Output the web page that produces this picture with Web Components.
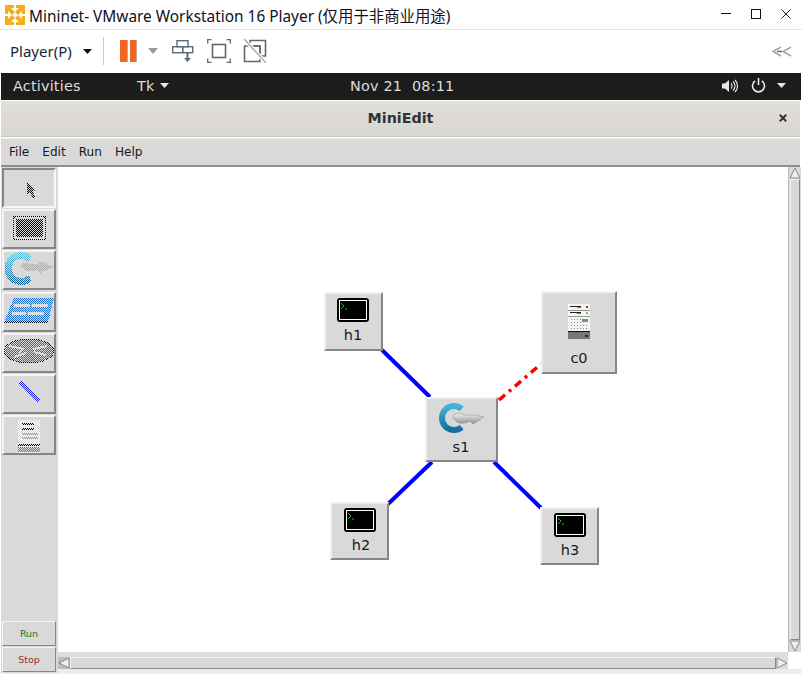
<!DOCTYPE html>
<html><head><meta charset="utf-8"><title>MiniEdit</title>
<style>
html,body{margin:0;padding:0;background:#fff;overflow:hidden}
body{width:802px;height:674px;font-family:"DejaVu Sans",sans-serif}
</style></head>
<body>
<vm-shell>
  <vm-titlebar slot="top">Mininet- VMware Workstation 16 Player (仅用于非商业用途)</vm-titlebar>
  <vm-toolbar slot="top"></vm-toolbar>
  <gnome-bar slot="top"></gnome-bar>
  <win-title slot="top">MiniEdit</win-title>
  <tk-menu slot="top"></tk-menu>
  <tk-palette slot="left"></tk-palette>
  <tk-canvas slot="main">
    <tk-node style="left:266px;top:125px;width:59px;height:59px" icon="term" ix="13" iy="6" lx="29" ly="35">h1</tk-node>
    <tk-node style="left:483px;top:124px;width:76px;height:83px" icon="server" ix="26" iy="12" lx="38" ly="59">c0</tk-node>
    <tk-node style="left:367px;top:230px;width:73px;height:65px" icon="switch" ix="12" iy="5" lx="36" ly="42">s1</tk-node>
    <tk-node style="left:272px;top:335px;width:59px;height:58px" icon="term" ix="14" iy="6" lx="31" ly="35">h2</tk-node>
    <tk-node style="left:482px;top:340px;width:59px;height:58px" icon="term" ix="14" iy="6" lx="30" ly="35">h3</tk-node>
  </tk-canvas>
</vm-shell>
<script>
const def=(name,html,init)=>customElements.define(name,class extends HTMLElement{
  constructor(){super();this.attachShadow({mode:'open'}).innerHTML=typeof html==='function'?html(this):html}
  connectedCallback(){init&&init(this)}
});
const CJK='"Noto Sans","Noto Sans CJK SC",sans-serif';

def('vm-shell',`<style>
:host{display:flex;flex-direction:column;width:802px;height:674px;background:#fff;box-sizing:border-box}
.main{display:flex;height:506px;margin:0 1px 0 1px;background:#d9d9d9}
.bottom{flex:1;background:#f0f0f0}
</style>
<slot name="top"></slot>
<div class="main"><slot name="left"></slot><slot name="main"></slot></div>
<div class="bottom"></div>`);

def('vm-titlebar',`<style>
:host{display:flex;align-items:center;box-sizing:border-box;background:#fff;border-bottom:1px solid #e4e4e4;padding:0 11px 0 5px;position:relative;flex:none;height:30px;
font:15.400px ${CJK};color:#101020}
svg{display:block;flex:none}
.t{margin-left:4px;flex:1;white-space:nowrap;position:relative;top:1px}
.b{display:flex;gap:20px;align-items:center;margin-top:-1px}
</style>
<svg width="20" height="20" viewBox="0 0 20 20" fill="#f3ae1b"><path id="c" d="M0 0h9v3H6l4 4-3 3-4-4v3H0z"/><path d="M20 0v9h-3V6l-4 4-3-3 4-4h-3V0z"/><path d="M20 20h-9v-3h3l-4-4 3-3 4 4v-3h3z"/><path d="M0 20v-9h3v3l4-4 3 3-4 4h3v3z"/></svg>
<span class="t"><slot></slot></span>
<div class="b">
<svg width="10" height="10" viewBox="0 0 10 10"><path d="M0 4.500h10" stroke="#111" stroke-width="1"/></svg>
<svg width="10" height="10" viewBox="0 0 10 10"><rect x=".5" y=".5" width="9" height="9" fill="none" stroke="#111"/></svg>
<svg width="10" height="10" viewBox="0 0 10 10"><path d="M.5.5l9 9M9.500.5l-9 9" stroke="#222" stroke-width="1"/></svg>
</div>`);

def('vm-toolbar',`<style>
:host{display:flex;align-items:center;flex:none;height:42px;background:#fff;padding-left:10px;position:relative;font:15px ${CJK};color:#1a2436}
svg{display:block;flex:none}
.sep{width:1px;height:28px;background:#c9c9c9;margin:0 16px 0 11px}
.car{margin-left:11px}
.r{margin-left:auto;margin-right:10px}
</style>
<span>Player(P)</span>
<svg class="car" width="9" height="5" viewBox="0 0 9 5"><path d="M0 0h9L4.500 5z" fill="#111"/></svg>
<div class="sep"></div>
<svg width="18" height="22" viewBox="0 0 18 22"><rect x="0" y="0" width="8" height="22" fill="#f26522"/><rect x="10" y="0" width="7" height="22" fill="#f26522"/><path d="M7.500 0v22M16.500 0v22" stroke="#c9a48f"/></svg>
<svg style="margin-left:10px" width="10" height="6" viewBox="0 0 10 6"><path d="M0 0h10L5 6z" fill="#999"/></svg>
<svg style="margin-left:14px" width="22" height="23" viewBox="0 0 22 23" fill="none" stroke="#5f6a72" stroke-width="1.400"><rect x="5" y=".7" width="11" height="6"/><rect x=".7" y="6.700" width="10" height="6"/><rect x="10.700" y="6.700" width="10" height="6"/><path d="M15.500 13v6" stroke-width="2"/><path d="M12 18h7l-3.500 4z" fill="#5f6a72" stroke="none"/></svg>
<svg style="margin-left:13px" width="24" height="24" viewBox="0 0 24 24" fill="none" stroke="#5f6a72" stroke-width="1.300"><path d="M.7 4.500V.7H4.500M19.500 .7h3.800V4.500M23.300 19.500v3.800H19.500M4.500 23.300H.7V19.500"/><rect x="5.500" y="5.500" width="13" height="13" stroke-width="1.600"/></svg>
<svg style="margin-left:12px" width="24" height="24" viewBox="0 0 24 24" fill="none" stroke="#5f6a72" stroke-width="1.600"><path d="M7 7V1.500h15.500V17H17M17 17V7H7"/><path d="M1.500 7H17v15.500H1.500z" stroke-width="1.600"/><path d="M1 0l22 24" stroke="#fff" stroke-width="4"/><path d="M1 0l22 24" stroke="#a9b0b5" stroke-width="1.500"/></svg>
<svg class="r" width="20" height="11" viewBox="0 0 20 11" fill="none" stroke="#9aa5ad" stroke-width="1.500"><path d="M9 1L1 5.500l8 4.500M19 1l-8 4.500 8 4.500"/><path d="M5 5.500h5" stroke="#5f6a72"/></svg>`);

def('gnome-bar',`<style>
:host{display:flex;align-items:center;flex:none;height:27px;box-sizing:border-box;padding-bottom:2px;margin:1px 1px 0 1px;background:#1c1c1c;color:#dcdcdc;font:14.400px "DejaVu Sans",sans-serif;letter-spacing:.2px;position:relative}
svg{display:block;flex:none}
.a{margin-left:12px;width:124px}
.tk{width:23px}
.clock{margin-left:181px;width:62px}
.right{margin-left:auto;display:flex;align-items:center;margin-right:15px}
</style>
<span class="a">Activities</span><span class="tk">Tk</span>
<svg width="9" height="5" viewBox="0 0 9 5"><path d="M0 0h9L4.500 5z" fill="#e8e8e8"/></svg>
<span class="clock">Nov 21</span><span>08:11</span>
<div class="right">
<svg width="16" height="14" viewBox="0 0 16 14" fill="none" stroke="#e8e8e8"><path d="M0 4.500h3L7 1v12L3 9.500H0z" fill="#e8e8e8" stroke="none"/><path d="M9 4.500a3.500 3.500 0 010 5M11 2.500a6 6 0 010 9M13 1a8.500 8.500 0 010 12" stroke-width="1.100"/></svg>
<svg style="margin-left:13px" width="15" height="15" viewBox="0 0 15 15" fill="none" stroke="#e8e8e8" stroke-width="1.600"><path d="M4 3a6 6 0 107 0"/><path d="M7.500 0v7"/></svg>
<svg style="margin-left:11px" width="9" height="5" viewBox="0 0 9 5"><path d="M0 0h9L4.500 5z" fill="#e8e8e8"/></svg>
</div>`);

def('win-title',`<style>
:host{display:flex;align-items:center;justify-content:center;flex:none;height:36px;margin:1px 2px 0 1px;background:linear-gradient(#e2dfdb,#d9d6d1);border-bottom:1px solid #c9c7c4;box-sizing:border-box;font:bold 14.300px "DejaVu Sans",sans-serif;color:#2e3436;position:relative;padding-bottom:1px}
svg{position:absolute;right:13px;top:13px}
</style><slot></slot>
<svg width="8" height="8" viewBox="0 0 8 8"><path d="M.8.8l6.400 6.400M7.200.8L.8 7.200" stroke="#2e3436" stroke-width="2"/></svg>`);

def('tk-menu',`<style>
:host{display:flex;align-items:center;gap:13px;flex:none;height:29px;margin:1px 2px 0 1px;box-sizing:border-box;padding:0 0 0 8px;background:#d9d9d9;border-top:1px solid #eee;border-bottom:2px solid #8e8e8e;font:12.100px "DejaVu Sans",sans-serif;color:#1a1a1a}
</style><span>File</span><span>Edit</span><span>Run</span><span>Help</span>`);

const stip=`<defs><pattern id="p" width="2" height="2" patternUnits="userSpaceOnUse"><rect width="1" height="1" fill="#fff"/><rect x="1" y="1" width="1" height="1" fill="#fff"/></pattern><mask id="m" maskUnits="userSpaceOnUse" x="0" y="0" width="54" height="40"><rect width="54" height="40" fill="url(#p)"/></mask><linearGradient id="sg" x1="0" y1="0" x2="0" y2="1"><stop offset="0" stop-color="#5fc0dd"/><stop offset="1" stop-color="#0a5f92"/></linearGradient></defs>`;
const pIcons={
 arrow:`<g mask="url(#m)"><path d="M25 14l8 8-3 1 3 6-2 1-3-6-3 3z" fill="#000" stroke="#000" stroke-width=".6"/></g>`,
 host:`<g mask="url(#m)"><rect x="11.500" y="7.500" width="32" height="23" rx="2" fill="none" stroke="#000" stroke-width="1.500"/><rect x="14" y="10" width="27" height="18" fill="#000"/></g>`,
 sw:`<g mask="url(#m)"><path d="M28 9a13 13 0 100 19" fill="none" stroke="url(#sg)" stroke-width="7"/><path d="M18 15c3-3 7-3 10-1l9 0 1-3 14 6-14 6-2-3c-4 2-12 2-15-1-1-1-2-2-3-4z" fill="#a8a8a8"/></g>`,
 legacy:`<g mask="url(#m)"><path d="M12 6h40l-6 24H2z" fill="#1a6fd0"/><path d="M2 30h44" stroke="#000" stroke-width="2"/></g><g fill="#ddd" mask="url(#m)"><rect x="12" y="12" width="16" height="3"/><rect x="30" y="12" width="16" height="3"/><rect x="10" y="20" width="14" height="3"/><rect x="26" y="20" width="16" height="3"/></g>`,
 router:`<g mask="url(#m)"><ellipse cx="27" cy="18" rx="25" ry="12" fill="#1a6fd0" stroke="#000"/><path d="M7 13l14 3-4 4M45 13l-14 3M12 24l12-4M44 22l-12-3" stroke="#ddd" stroke-width="2" fill="none"/></g>`,
 link:`<g mask="url(#m)"><path d="M18 8l19 19" stroke="#2222ff" stroke-width="3"/></g>`,
 ctl:`<g mask="url(#m)"><rect x="16" y="5" width="22" height="33" fill="#fff"/><path d="M20 9h12M20 14h12M16 30h22" stroke="#000" stroke-width="2"/><path d="M20 19h16M20 23h16" stroke="#999" stroke-width="2"/><rect x="16" y="32" width="22" height="5" fill="#777"/></g>`
};
def('tk-tool',el=>`<style>
:host{display:block;width:54px;height:40px;box-sizing:border-box;background:#d9d9d9;border:2px solid;border-color:#f4f4f4 #868686 #868686 #f4f4f4;margin-bottom:1px;position:relative}
:host([active]){border-color:#868686 #f8f8f8 #f8f8f8 #868686}
svg{position:absolute;left:-2px;top:-2px;display:block}
</style><svg width="54" height="40" shape-rendering="crispEdges">${stip}${pIcons[el.getAttribute('icon')]||''}</svg>`);
def('tk-btn',`<style>
:host{display:flex;align-items:center;justify-content:center;width:54px;height:25px;box-sizing:border-box;background:#d9d9d9;border:1px solid;border-color:#f4f4f4 #868686 #868686 #f4f4f4;font:9.500px "DejaVu Sans",sans-serif;margin-bottom:1px}
</style><slot></slot>`);
def('tk-palette',`<style>
:host{display:flex;flex-direction:column;flex:none;width:57px;padding:1px 0 0 1px;box-sizing:border-box;background:#d9d9d9}
.sp{flex:1}
</style>
<tk-tool icon="arrow" active></tk-tool><tk-tool icon="host"></tk-tool><tk-tool icon="sw"></tk-tool><tk-tool icon="legacy" style="margin-top:1px"></tk-tool><tk-tool icon="router"></tk-tool><tk-tool icon="link"></tk-tool><tk-tool icon="ctl"></tk-tool>
<div class="sp"></div>
<tk-btn style="color:#0f7a0f">Run</tk-btn><tk-btn style="color:#a52a2a">Stop</tk-btn>`);

const nIcons={
 term:`<svg width="32" height="24" viewBox="0 0 32 24"><rect width="32" height="24" rx="3" fill="#000"/><rect x="2.500" y="2.500" width="27" height="19" fill="none" stroke="#fff"/><path d="M4 5l3 3-3 3M8 11h2" stroke="#18c018" fill="none"/></svg>`,
 server:`<svg width="24" height="37" viewBox="0 0 24 37"><rect x="1" y="1" width="22" height="35" fill="#f4f4f4"/><rect x="1" y="7" width="22" height="1" fill="#999"/><rect x="1" y="13" width="22" height="1" fill="#999"/><rect x="3" y="3" width="11" height="1" fill="#222"/><rect x="10" y="4" width="4" height="1" fill="#777"/><rect x="3" y="9" width="11" height="1" fill="#222"/><rect x="10" y="10" width="4" height="1" fill="#777"/><rect x="19" y="3" width="2" height="2" fill="#d22"/><rect x="19" y="9" width="2" height="2" fill="#7c3"/><g fill="#888"><path d="M4 16h1v1H4zM7 16h1v1H7zM10 16h1v1h-1zM13 16h1v1h-1zM4 19h1v1H4zM7 19h1v1H7zM10 19h1v1h-1zM13 19h1v1h-1zM4 22h1v1H4zM7 22h1v1H7zM10 22h1v1h-1zM13 22h1v1h-1zM16 22h1v1h-1zM19 22h1v1h-1zM4 25h1v1H4zM7 25h1v1H7zM10 25h1v1h-1zM13 25h1v1h-1zM16 25h1v1h-1zM19 25h1v1h-1z"/></g><rect x="15" y="16" width="6" height="3" fill="#6a9a7a"/><rect x="1" y="28" width="22" height="1" fill="#111"/><rect x="1" y="29" width="22" height="7" fill="#777"/><rect x="18" y="32" width="3" height="2" fill="#422"/></svg>`,
 switch:`<svg width="50" height="36" viewBox="0 0 50 36"><defs><linearGradient id="g" x1="0" y1="0" x2="0" y2="1"><stop offset="0" stop-color="#45b3d8"/><stop offset="1" stop-color="#0f6f9e"/></linearGradient><linearGradient id="a" x1="0" y1="0" x2="0" y2="1"><stop offset="0" stop-color="#f2f2f2"/><stop offset="1" stop-color="#8f8f8f"/></linearGradient></defs>
 <path d="M24.700 6.800A12 12 0 1024.700 25.200" fill="none" stroke="url(#g)" stroke-width="6"/>
 <path d="M16 14c3-4 8-3 11-1l11 0 9 2-11 7-3-3c-5 3-13 3-15-1-1-1-2-2-2-4z" fill="url(#a)" stroke="#8a8a8a" stroke-width=".5"/></svg>`
};
def('tk-node',el=>`<style>
:host{position:absolute;display:block;box-sizing:border-box;background:#d9d9d9;border:2px solid;border-color:#f0f0f0 #868686 #868686 #f0f0f0;color:#1a1a1a;font:14.500px "DejaVu Sans",sans-serif}
.i{position:absolute;left:${el.getAttribute('ix')-2}px;top:${el.getAttribute('iy')-2}px;line-height:0}
.l{position:absolute;left:${el.getAttribute('lx')-2}px;top:${el.getAttribute('ly')-2}px;transform:translateX(-50%);line-height:17px}
svg{display:block}
</style><div class="i">${nIcons[el.getAttribute('icon')]}</div><div class="l"><slot></slot></div>`);

def('tk-canvas',`<style>
:host{display:grid;grid-template-columns:730px 13px;grid-template-rows:485px 17px;flex:none;width:743px;position:relative;background:#ececec}
.c{position:relative;background:#fff;overflow:hidden}
svg.links{position:absolute;left:0;top:0}
.v{background:#d9d9d9;display:flex;flex-direction:column;border-left:1px solid #bbb;box-sizing:border-box}
.th{flex:1;margin:0 1px;background:#d9d9d9;border:1px solid;border-color:#f4f4f4 #868686 #868686 #f4f4f4}
.h{background:#dcdcdc;padding-top:5px;box-sizing:border-box;display:flex;height:17px}
.hth{flex:1;background:#d9d9d9;border:1px solid;border-color:#f4f4f4 #868686 #868686 #f4f4f4}
.corner{background:#fff}
svg{display:block;flex:none}
</style>
<div class="c">
<svg class="links" width="730" height="485"><g stroke="#0000ff" stroke-width="4" fill="none"><path d="M324 183l48 47"/><path d="M330 337l44-42"/><path d="M436 295l47 46"/></g><path d="M441 233l42-36" stroke="#ff0000" stroke-width="3.500" stroke-dasharray="8 5 3 5" fill="none"/></svg>
<slot></slot>
</div>
<div class="v">
<svg width="12" height="12" viewBox="0 0 12 12"><path d="M6 1l5 10H1z" fill="#eee" stroke="#8a8a8a"/></svg>
<div class="th"></div>
<svg width="12" height="12" viewBox="0 0 12 12"><path d="M6 11l5-10H1z" fill="#eee" stroke="#8a8a8a"/></svg>
</div>
<div class="h">
<svg width="12" height="12" viewBox="0 0 12 12"><rect width="12" height="12" fill="#bdbdbd"/><path d="M1 6l10-5v10z" fill="#eee" stroke="#8a8a8a"/></svg>
<div class="hth"></div>
<svg width="12" height="12" viewBox="0 0 12 12"><path d="M11 6L1 1v10z" fill="#eee" stroke="#8a8a8a"/></svg>
</div>
<div class="corner"></div>`);
</script>
</body></html>
